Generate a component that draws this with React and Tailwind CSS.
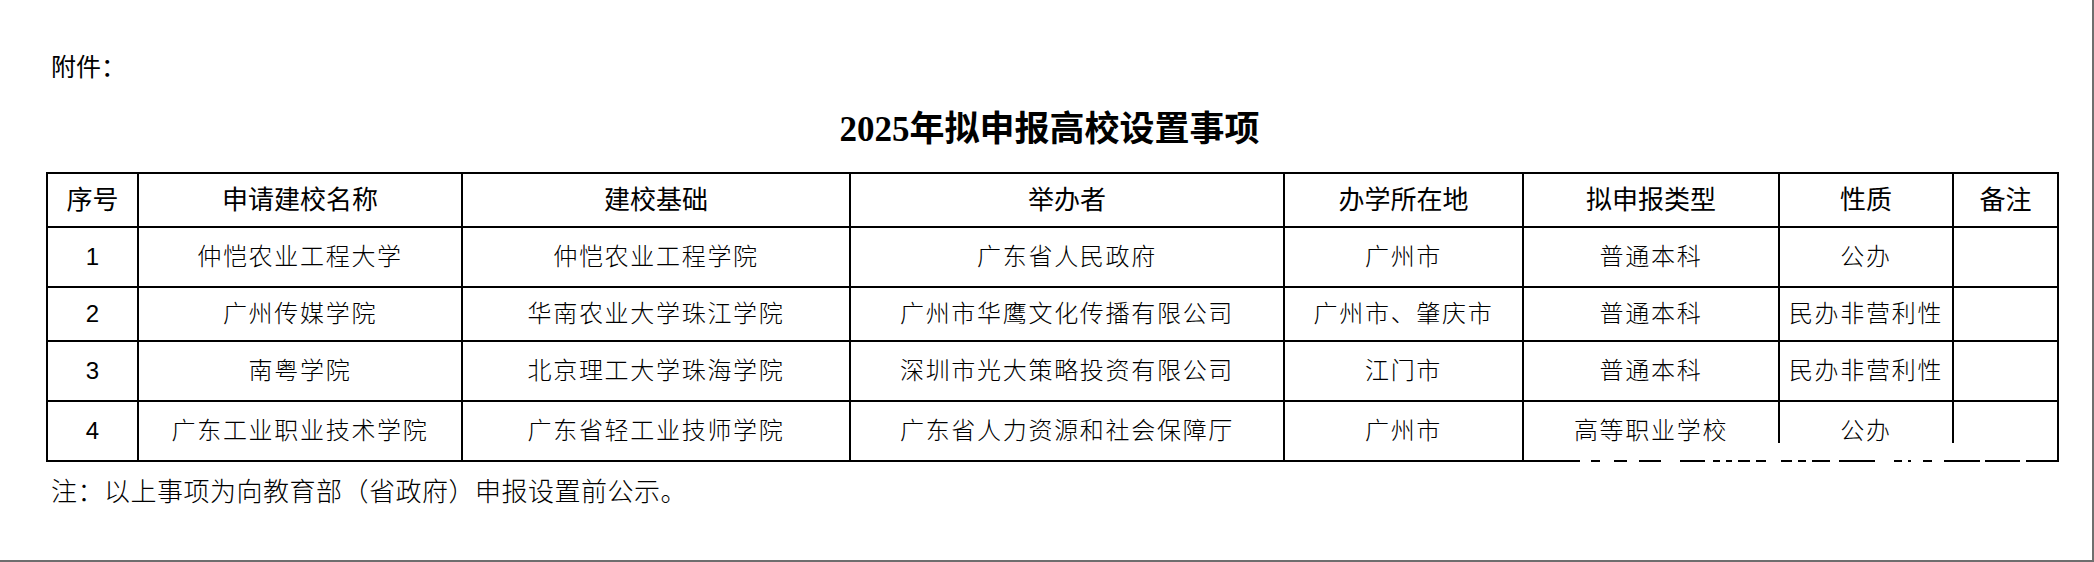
import React from "react";

const headers = ["序号", "申请建校名称", "建校基础", "举办者", "办学所在地", "拟申报类型", "性质", "备注"];

const rows = [
    ["1", "仲恺农业工程大学", "仲恺农业工程学院", "广东省人民政府", "广州市", "普通本科", "公办", ""],
    ["2", "广州传媒学院", "华南农业大学珠江学院", "广州市华鹰文化传播有限公司", "广州市、肇庆市", "普通本科", "民办非营利性", ""],
    ["3", "南粤学院", "北京理工大学珠海学院", "深圳市光大策略投资有限公司", "江门市", "普通本科", "民办非营利性", ""],
    ["4", "广东工业职业技术学院", "广东省轻工业技师学院", "广东省人力资源和社会保障厅", "广州市", "高等职业学校", "公办", ""],
];

// leftover pieces of the bottom rule where the scan broke up
const brokenRule = [
    [11, 20], [34, 47], [59, 81], [100, 125], [133, 140], [146, 152], [158, 170], [176, 186],
    [201, 212], [218, 226], [232, 250], [259, 295], [314, 322], [328, 331], [343, 352], [364, 400],
    [405, 440], [446, 477],
];

export default function App() {
    return (
        <div className="w-[2094px] h-[562px] bg-white border-r-2 border-b-2 border-[#6e6e6e] text-black font-['Liberation_Sans','Noto_Sans_CJK_SC',sans-serif] overflow-hidden">
            <div className="pt-[51px] pl-[51px] text-[25px] leading-[32px] h-[83px]">附件：</div>

            <h1 className="mt-[25px] h-[44px] leading-[44px] pl-[7px] text-center text-[35px] font-bold font-['Liberation_Serif','Noto_Sans_CJK_SC',serif]">
                2025年拟申报高校设置事项
            </h1>

            <div className="relative mt-[20px] ml-[46px] w-[2013px]">
                <div className="grid grid-cols-[89px_322px_386px_432px_237px_254px_172px_103px] grid-rows-[52px_58px_52px_58px_58px] gap-[2px] p-[2px] bg-black">
                    {headers.map((h) => (
                        <div key={h} className="bg-white flex items-center justify-center text-[26px]">
                            {h}
                        </div>
                    ))}
                    {rows.map((r) =>
                        r.map((cell, i) => (
                            <div
                                key={r[0] + "-" + i}
                                className={
                                    i === 0
                                        ? "bg-white flex items-center justify-center text-[24px]"
                                        : "bg-white flex items-center justify-center text-[24px] font-light tracking-[1.7px]"
                                }
                            >
                                {cell}
                            </div>
                        ))
                    )}
                </div>

                {/* broken bit at the bottom right of the last row */}
                <div className="absolute left-[1534px] top-[271px] w-[477px] h-[19px] bg-white">
                    {brokenRule.map(([a, b]) => (
                        <div key={a} className="absolute bottom-0 h-[2px] bg-black" style={{ left: a, width: b - a }} />
                    ))}
                </div>
            </div>

            <p className="mt-[13px] pl-[51px] text-[26px] leading-[34px] font-light tracking-[0.5px]">
                注：以上事项为向教育部（省政府）申报设置前公示。
            </p>
        </div>
    );
}
